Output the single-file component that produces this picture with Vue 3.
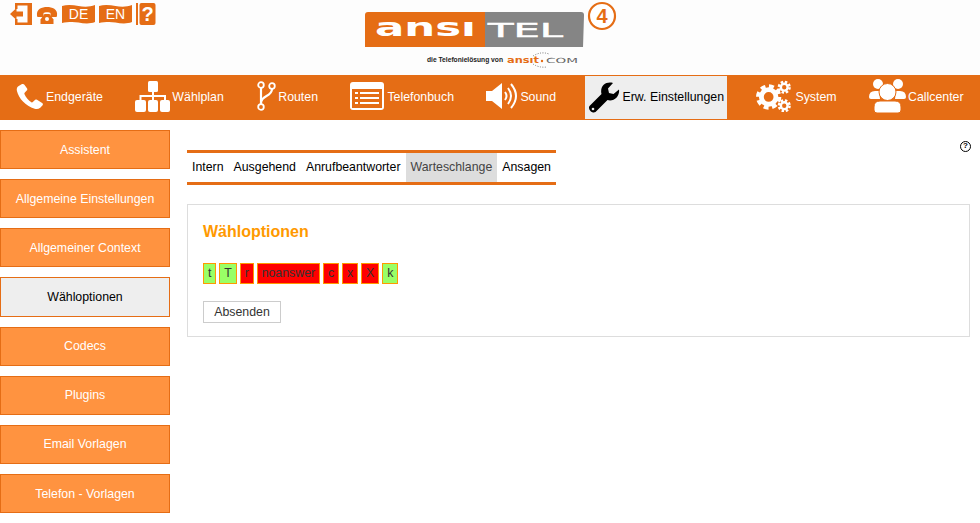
<template>
  <div class="page">
    <header class="top">
      <div class="quick-icons">
        <svg width="22" height="22" viewBox="0 0 22 22">
          <path d="M5 0h17v22H5v-6h2.500v3.500h10v-17h-10V6H5z" fill="#e56d15" />
          <path d="M0 11l6.500-6v3.500h6.500v5H6.500V17z" fill="#e56d15" />
        </svg>
        <svg width="22" height="18" viewBox="0 0 22 18">
          <path d="M1 9.500C0 3 6 1 11 1s11 2 10 8.500c0 1-.5 1.500-1.500 1.500h-3.500c-1 0-1.500-.5-1.500-1.500V7C13.500 6 8.500 6 7.500 7v2.500c0 1-.5 1.500-1.500 1.500H2.500C1.500 11 1 10.500 1 9.500z" fill="#e56d15" />
          <path d="M8.500 8h5l4 5.500V18h-13v-4.500z" fill="#e56d15" />
          <circle cx="11" cy="13" r="2" fill="#fdfdfd" />
        </svg>
        <svg width="33" height="19" viewBox="0 0 33 19">
          <path d="M0 1c5-1.500 11-1 16.500 0S28 2 33 0v17c-5 2-11 1.500-16.500.5S5 17 0 18z" fill="#e56d15" />
          <text x="16.500" y="14" text-anchor="middle" class="flag-text">DE</text>
        </svg>
        <svg width="33" height="19" viewBox="0 0 33 19">
          <path d="M0 1c5-1.500 11-1 16.500 0S28 2 33 0v17c-5 2-11 1.500-16.500.5S5 17 0 18z" fill="#e56d15" />
          <text x="16.500" y="14" text-anchor="middle" class="flag-text">EN</text>
        </svg>
        <svg width="20" height="22" viewBox="0 0 20 22">
          <rect x="0" y="0" width="2" height="22" fill="#e56d15" />
          <rect x="3.500" y="0" width="16" height="22" rx="2" fill="#e56d15" />
          <text x="11.500" y="17.500" text-anchor="middle" class="help-text">?</text>
        </svg>
      </div>
      <div class="logo">
        <svg width="255" height="70" viewBox="0 0 255 70">
          <path d="M3 12h117v35H0V15q0-3 3-3z" fill="#e56d15" />
          <path d="M120 12h96q3 0 3 3l-1 32h-98z" fill="#858585" />
          <text x="10" y="36" class="logo-word" textLength="101" lengthAdjust="spacingAndGlyphs">ansı</text>
          <text x="123" y="37" class="logo-word logo-tel" textLength="75" lengthAdjust="spacingAndGlyphs">TEL</text>
          <circle cx="237" cy="16" r="13" fill="#fff" stroke="#e56d15" stroke-width="2.200" />
          <text x="237" y="23" text-anchor="middle" class="logo-four">4</text>
          <text x="62" y="62" class="logo-claim" textLength="76" lengthAdjust="spacingAndGlyphs">die Telefonielösung von</text>
          <text x="142" y="63" class="logo-ansit" textLength="32" lengthAdjust="spacingAndGlyphs">ansıt</text>
          <text x="181" y="63" class="logo-com" textLength="32" lengthAdjust="spacingAndGlyphs">COM</text>
          <circle cx="177" cy="61" r="1.200" fill="#e56d15" />
          <path d="M168 56q8-5 16-2" fill="none" stroke="#777" stroke-width="1" stroke-dasharray="1 1.500" />
          <path d="M168 64q6 4 14 3" fill="none" stroke="#777" stroke-width="1" stroke-dasharray="1 1.500" />
        </svg>
      </div>
    </header>

    <nav class="main-nav">
      <a class="nav-item">
        <svg width="28" height="27" viewBox="0 0 30 28">
          <path d="M6 1L2.500 3C1 4 .5 6 1 8c2 8 9 16 19 19 2 .5 4 .5 6-1l2.500-2.500c.5-1 .5-2-.5-2.500l-5.500-3.500c-1-.5-2-.5-2.500.5l-2 2c-.5.5-1 .5-1.500.2-3-2-6-5.500-7.500-9-.2-.5 0-1 .5-1.500l2-2c.7-.7.8-1.500.4-2.300L9 1.500C8.500.5 7 .4 6 1z" fill="#fff" />
        </svg>
        <span>Endgeräte</span>
      </a>
      <a class="nav-item">
        <svg width="35" height="31" viewBox="0 0 35 31">
          <rect x="13" y="0" width="10" height="11" rx="1.500" fill="#fff" />
          <rect x="0" y="19" width="11" height="12" rx="2" fill="#fff" />
          <rect x="13" y="19" width="10" height="12" rx="2" fill="#fff" />
          <rect x="25" y="19" width="10" height="12" rx="2" fill="#fff" />
          <path d="M18 11v8M5.500 19v-4h24.500v4" fill="none" stroke="#fff" stroke-width="2" />
        </svg>
        <span>Wählplan</span>
      </a>
      <a class="nav-item">
        <svg width="20" height="30" viewBox="0 0 20 30">
          <path d="M5 7v17M16 8c0 8-11 6-11 14" fill="none" stroke="#fff" stroke-width="2.200" />
          <circle cx="5" cy="4" r="2.800" fill="#e56d15" stroke="#fff" stroke-width="1.800" />
          <circle cx="16" cy="5" r="2.800" fill="#e56d15" stroke="#fff" stroke-width="1.800" />
          <circle cx="5" cy="26" r="2.800" fill="#e56d15" stroke="#fff" stroke-width="1.800" />
        </svg>
        <span>Routen</span>
      </a>
      <a class="nav-item">
        <svg width="35" height="28" viewBox="0 0 35 28">
          <rect x="0" y="0" width="34" height="28" rx="3" fill="#fff" />
          <rect x="2" y="7" width="30" height="19" fill="#e56d15" />
          <path d="M10 10h19v2H10zM10 15h19v2H10zM10 20h19v2H10zM5 10h3v2H5zM5 15h3v2H5zM5 20h3v2H5z" fill="#fff" />
        </svg>
        <span>Telefonbuch</span>
      </a>
      <a class="nav-item">
        <svg width="32" height="28" viewBox="0 0 32 28">
          <path d="M0 9h6l10-8v26L6 19H0z" fill="#fff" />
          <path d="M19 10q3 4 0 8M22 6q6 8 0 16M25 2q10 12 0 24" fill="none" stroke="#fff" stroke-width="2" />
        </svg>
        <span>Sound</span>
      </a>
      <a class="nav-item active">
        <svg width="32" height="32" viewBox="0 0 32 32">
          <path d="M31 7.500L25.500 12 21 11l-1-4.500L25 1c-7-2-13.500 3-11.500 11L1.500 24c-2 3 2.500 8 6 6l12-12c6.500 2 12.500-4 11.500-10.500z" fill="#000" />
          <circle cx="5" cy="27" r="1.300" fill="#eee" />
        </svg>
        <span>Erw. Einstellungen</span>
      </a>
      <a class="nav-item">
        <svg width="37" height="32" viewBox="0 0 38 32">
          <circle cx="13" cy="17" r="7.500" fill="none" stroke="#fff" stroke-width="5" />
          <circle cx="13" cy="17" r="11" fill="none" stroke="#fff" stroke-width="4" stroke-dasharray="5 3.640" />
          <circle cx="29" cy="7" r="3.500" fill="none" stroke="#fff" stroke-width="2.500" />
          <circle cx="29" cy="7" r="5.500" fill="none" stroke="#fff" stroke-width="2.500" stroke-dasharray="2.500 1.820" />
          <circle cx="29" cy="26" r="3.500" fill="none" stroke="#fff" stroke-width="2.500" />
          <circle cx="29" cy="26" r="5.500" fill="none" stroke="#fff" stroke-width="2.500" stroke-dasharray="2.500 1.820" />
        </svg>
        <span>System</span>
      </a>
      <a class="nav-item">
        <svg width="37" height="35" viewBox="0 0 37 35">
          <circle cx="9" cy="5" r="5" fill="#fff" />
          <circle cx="29" cy="5" r="5" fill="#fff" />
          <path d="M0 18q0-6 6-6h4l1 8H2q-2 0-2-2zM37 18q0-6-6-6h-4l-1 8h9q2 0 2-2z" fill="#fff" />
          <circle cx="18.500" cy="13" r="8.500" fill="#fff" stroke="#e56d15" stroke-width="1" />
          <path d="M5 31v-3q0-6 6-6h15q6 0 6 6v3q0 3-3 3H8q-3 0-3-3z" fill="#fff" stroke="#e56d15" stroke-width="1" />
        </svg>
        <span>Callcenter</span>
      </a>
    </nav>

    <div class="content">
      <aside class="side-menu">
        <a v-for="item in sideItems" :key="item" class="side-item" :class="{ active: item === 'Wähloptionen' }">
          {{ item }}
        </a>
      </aside>

      <main class="main">
        <div class="tab-row">
          <ul class="tabs">
            <li v-for="tab in tabs" :key="tab" :class="{ active: tab === 'Warteschlange' }">{{ tab }}</li>
          </ul>
          <span class="help">?</span>
        </div>

        <section class="panel">
          <h2>Wähloptionen</h2>
          <div class="options">
            <span v-for="opt in options" :key="opt.label" class="option" :class="opt.on ? 'on' : 'off'">{{ opt.label }}</span>
          </div>
          <button type="button" class="submit">Absenden</button>
        </section>
      </main>
    </div>
  </div>
</template>

<script setup>
const sideItems = [
  "Assistent",
  "Allgemeine Einstellungen",
  "Allgemeiner Context",
  "Wähloptionen",
  "Codecs",
  "Plugins",
  "Email Vorlagen",
  "Telefon - Vorlagen",
];

const tabs = ["Intern", "Ausgehend", "Anrufbeantworter", "Warteschlange", "Ansagen"];

const options = [
  { label: "t", on: true },
  { label: "T", on: true },
  { label: "r", on: false },
  { label: "noanswer", on: false },
  { label: "c", on: false },
  { label: "x", on: false },
  { label: "X", on: false },
  { label: "k", on: true },
];
</script>

<style>
html,
body {
  margin: 0;
  background: #fff;
}
</style>

<style scoped>
.page {
  height: 523px;
  overflow: hidden;
  font-family: "Liberation Sans", Arial, sans-serif;
  font-size: 12.35px;
  color: #000;
}

.top {
  height: 75px;
  display: flex;
  background: #fdfdfd;
}

.quick-icons {
  display: flex;
  align-items: flex-start;
  gap: 4px;
  width: 350px;
  padding: 3px 0 0 10px;
  box-sizing: border-box;
}

.quick-icons svg:nth-child(2) {
  margin-top: 3px;
}

.quick-icons svg:nth-child(3),
.quick-icons svg:nth-child(4) {
  margin-top: 2px;
}

.flag-text {
  font-size: 14px;
  fill: #fff;
}

.help-text {
  font-size: 20px;
  font-weight: bold;
  fill: #fff;
}

.logo {
  margin-left: 15px;
}

.logo svg {
  display: block;
}

.logo-word {
  font-family: "DejaVu Sans", sans-serif;
  font-size: 24px;
  font-weight: bold;
  fill: #fff;
}

.logo-tel {
  font-size: 19px;
  font-weight: normal;
  stroke: #fff;
  stroke-width: 0.5px;
}

.logo-four {
  font-size: 20px;
  font-weight: bold;
  fill: #e56d15;
}

.logo-claim {
  font-size: 7px;
  font-weight: bold;
  fill: #222;
}

.logo-ansit {
  font-family: "DejaVu Sans", sans-serif;
  font-size: 9px;
  font-weight: bold;
  fill: #e56d15;
}

.logo-com {
  font-family: "DejaVu Sans", sans-serif;
  font-size: 7px;
  fill: #666;
}

.main-nav {
  height: 45px;
  display: flex;
  gap: 26.4px;
  padding-left: 13px;
  background: #e56d15;
}

.nav-item {
  display: flex;
  align-items: center;
  gap: 2px;
  height: 43px;
  margin-top: 1px;
  padding: 0 3px;
  color: #fff;
  white-space: nowrap;
}

.nav-item svg {
  margin-top: -3px;
}

.nav-item span {
  margin-top: -2px;
}

.nav-item.active {
  background: #eee;
  color: #000;
}

.nav-item.active svg {
  margin-top: 0;
}

.content {
  display: flex;
}

.side-menu {
  flex: none;
  width: 170px;
  display: flex;
  flex-direction: column;
  gap: 10px;
  padding-top: 10px;
}

.side-item {
  height: 37px;
  line-height: 37px;
  text-align: center;
  background: #ff9340;
  border: 1px solid #e56d15;
  color: #fff;
}

.side-item:nth-child(-n + 3),
.side-item:last-child {
  line-height: 38px;
}

.side-item.active {
  height: 38px;
  line-height: 38px;
  background: #eee;
  color: #000;
}

.main {
  flex: 1;
  padding: 20px 10px 0 17px;
}

.tab-row {
  display: flex;
  justify-content: space-between;
  align-items: flex-start;
}

.tabs {
  display: flex;
  list-style: none;
  margin: 10px 0 0;
  padding: 0;
  border-top: 3px solid #e56d15;
  border-bottom: 3px solid #e56d15;
  font-size: 12.33px;
}

.tabs li {
  height: 29px;
  line-height: 29px;
  padding: 0 5px;
}

.tabs li.active {
  background: #ddd;
  color: #444;
}

.help {
  width: 11px;
  height: 11px;
  margin-top: 1px;
  margin-right: -1px;
  border: 1.5px solid #000;
  border-radius: 50%;
  box-sizing: border-box;
  font-size: 8px;
  line-height: 8px;
  font-weight: bold;
  text-align: center;
}

.panel {
  margin-top: 19px;
  height: 133px;
  box-sizing: border-box;
  padding: 0 15px;
  border: 1px solid #ddd;
}

.panel h2 {
  margin: 0;
  padding-top: 17px;
  font-size: 16px;
  line-height: 20px;
  font-weight: bold;
  color: #f90;
}

.options {
  display: flex;
  gap: 2.85px;
  margin-top: 21px;
}

.option {
  height: 19px;
  line-height: 19px;
  padding: 0 4px;
  border: 1px solid #f90;
  color: #333;
}

.option.on {
  background: #9f6;
}

.option.off {
  background: #f00;
}

.submit {
  display: block;
  margin-top: 17px;
  width: 78px;
  height: 22px;
  padding: 0;
  background: #fff;
  border: 1px solid #ccc;
  font-family: inherit;
  font-size: 12.35px;
  color: #333;
}
</style>
